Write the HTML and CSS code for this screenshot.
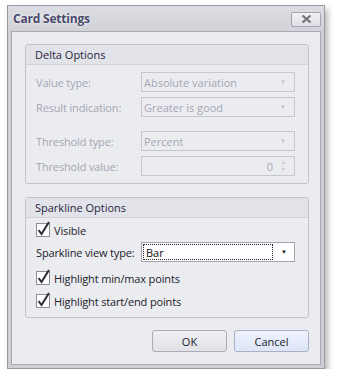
FILE: index.html
```html
<!DOCTYPE html>
<html lang="en">
<head>
  <meta charset="UTF-8">
  <title>Card Settings</title>
  <link rel="stylesheet" href="styles.css">
</head>
<body>
  <div class="window">
    <div class="title-bar">
      <span class="title">Card Settings</span>
      <span class="close-btn">
        <svg width="11" height="8" viewBox="0 0 11 8"><path d="M1.5 0.5 L9.5 7.5 M9.5 0.5 L1.5 7.5" stroke="#76767e" stroke-width="2.2"/></svg>
      </span>
    </div>
    <div class="content">
      <div class="group">
        <div class="group-header">Delta Options</div>
        <div class="group-body delta">
          <div class="row">
            <span class="label disabled">Value type:</span>
            <div class="combo disabled"><span>Absolute variation</span><span class="arrow">&#9660;</span></div>
          </div>
          <div class="row">
            <span class="label disabled">Result indication:</span>
            <div class="combo disabled"><span>Greater is good</span><span class="arrow">&#9660;</span></div>
          </div>
          <div class="row spaced">
            <span class="label disabled">Threshold type:</span>
            <div class="combo disabled"><span>Percent</span><span class="arrow">&#9660;</span></div>
          </div>
          <div class="row">
            <span class="label disabled">Threshold value:</span>
            <div class="combo disabled spin"><span class="num">0</span><span class="spinner"><span>&#9650;</span><span>&#9660;</span></span></div>
          </div>
        </div>
      </div>

      <div class="group sparkline">
        <div class="group-header">Sparkline Options</div>
        <div class="group-body">
          <label class="check">
            <svg class="box" width="16" height="17" viewBox="0 0 16 17"><rect x="0.5" y="2.5" width="13" height="13" fill="#fff" stroke="#8d8d96"/><path d="M2.5 9 L5.5 13 L13 1" fill="none" stroke="#2c2c34" stroke-width="2"/></svg>
            Visible
          </label>
          <div class="row view-type">
            <span class="label">Sparkline view type:</span>
            <div class="combo active"><span class="focus">Bar</span><span class="arrow dark">&#9660;</span></div>
          </div>
          <label class="check">
            <svg class="box" width="16" height="17" viewBox="0 0 16 17"><rect x="0.5" y="2.5" width="13" height="13" fill="#fff" stroke="#8d8d96"/><path d="M2.5 9 L5.5 13 L13 1" fill="none" stroke="#2c2c34" stroke-width="2"/></svg>
            Highlight min/max points
          </label>
          <label class="check">
            <svg class="box" width="16" height="17" viewBox="0 0 16 17"><rect x="0.5" y="2.5" width="13" height="13" fill="#fff" stroke="#8d8d96"/><path d="M2.5 9 L5.5 13 L13 1" fill="none" stroke="#2c2c34" stroke-width="2"/></svg>
            Highlight start/end points
          </label>
        </div>
      </div>

      <div class="buttons">
        <button class="button">OK</button>
        <button class="button default">Cancel</button>
      </div>
    </div>
  </div>
</body>
</html>
```

FILE: styles.css
```css
* {
  box-sizing: border-box;
  font-family: 'Open Sans', 'Noto Sans', Arial, sans-serif;
}
body {
  margin: 0;
  background: #fff;
  font-size: 11px;
  color: #2b2b3b;
}
.window {
  margin: 5px 0 0 7px;
  width: 318px;
  height: 364px;
  border: 1px solid #9a9aa4;
  background: #cfd0d6;
  padding: 0 3px 3px 3px;
  display: flex;
  flex-direction: column;
  box-shadow: 3px 4px 6px rgba(0, 0, 0, 0.28);
}
.title-bar {
  height: 25px;
  display: flex;
  align-items: center;
  justify-content: space-between;
  background: linear-gradient(#dcdde2, #d2d3d9);
  margin: 0 -3px;
  padding-left: 5px;
  padding-right: 3px;
}
.title {
  font-weight: bold;
  font-size: 12px;
  color: #4a4a6c;
  text-shadow: 0 0 3px #fff;
  letter-spacing: -0.2px;
}
.close-btn {
  width: 30px;
  height: 15px;
  border: 1px solid #a4a4ae;
  border-radius: 2px;
  background: linear-gradient(#f1f1f4, #dedfe4);
  display: flex;
  align-items: center;
  justify-content: center;
  margin-top: 1px;
}
.content {
  flex: 1;
  border: 1px solid #a9a9b3;
  background: #ebecf0;
  padding: 12px 11px 0 13px;
  display: flex;
  flex-direction: column;
}
.group {
  border: 1px solid #c3c4cb;
  border-radius: 3px;
}
.group-header {
  height: 20px;
  padding-left: 9px;
  display: flex;
  align-items: center;
  background: #e2e3e8;
  border-bottom: 1px solid #d3d4da;
  border-radius: 3px 3px 0 0;
  font-size: 11px;
  color: #262640;
}
.group-body {
  padding: 7px 13px 7px 10px;
  display: flex;
  flex-direction: column;
}
.row {
  display: flex;
  align-items: center;
  justify-content: space-between;
  height: 20px;
  white-space: nowrap;
}
.delta .row + .row {
  margin-top: 5px;
}
.delta .row.spaced {
  margin-top: 14px;
}
.label {
  font-size: 11px;
  letter-spacing: -0.15px;
}
.disabled {
  color: #a6a6b4;
}
.combo {
  width: 154px;
  height: 20px;
  border: 1px solid #c6c7ce;
  display: flex;
  align-items: center;
  justify-content: space-between;
  padding: 0 4px 0 2px;
  font-size: 11px;
}
.arrow {
  font-size: 6px;
  color: #c4c4cc;
  margin-right: 4px;
}
.spin {
  justify-content: flex-end;
}
.num {
  margin-right: 8px;
}
.spinner {
  display: flex;
  flex-direction: column;
  font-size: 5px;
  line-height: 7px;
  color: #c4c4cc;
  margin-right: 4px;
}
.sparkline {
  margin-top: 13px;
}
.sparkline .group-body {
  padding: 4px 13px 7px 10px;
}
.check {
  display: flex;
  align-items: center;
  height: 17px;
  font-size: 11px;
  letter-spacing: -0.15px;
  color: #22222c;
  white-space: nowrap;
}
.check .box {
  margin-right: 2px;
  margin-top: -3px;
}
.view-type {
  margin: 3px 0 8px;
  color: #22222c;
}
.check + .check {
  margin-top: 6px;
}
.combo.active {
  border: 1px solid #a2a3ad;
  background: #fff;
  padding: 1px 4px 1px 1px;
  color: #111;
}
.focus {
  flex: 1;
  height: 100%;
  border: 1px dotted #222;
  display: flex;
  align-items: center;
  padding-left: 2px;
  margin-right: 8px;
}
.arrow.dark {
  color: #222;
  margin-right: 3px;
}
.buttons {
  display: flex;
  justify-content: flex-end;
  gap: 7px;
  margin-top: 12px;
}
.button {
  width: 75px;
  height: 22px;
  border: 1px solid #abacb5;
  border-radius: 3px;
  background: linear-gradient(#f0f0f3, #e0e1e6);
  font-size: 11px;
  color: #22222c;
  padding: 0;
}
.button.default {
  border-color: #a9b1c8;
  background: linear-gradient(#eef2fc, #dde5f7);
}
```
